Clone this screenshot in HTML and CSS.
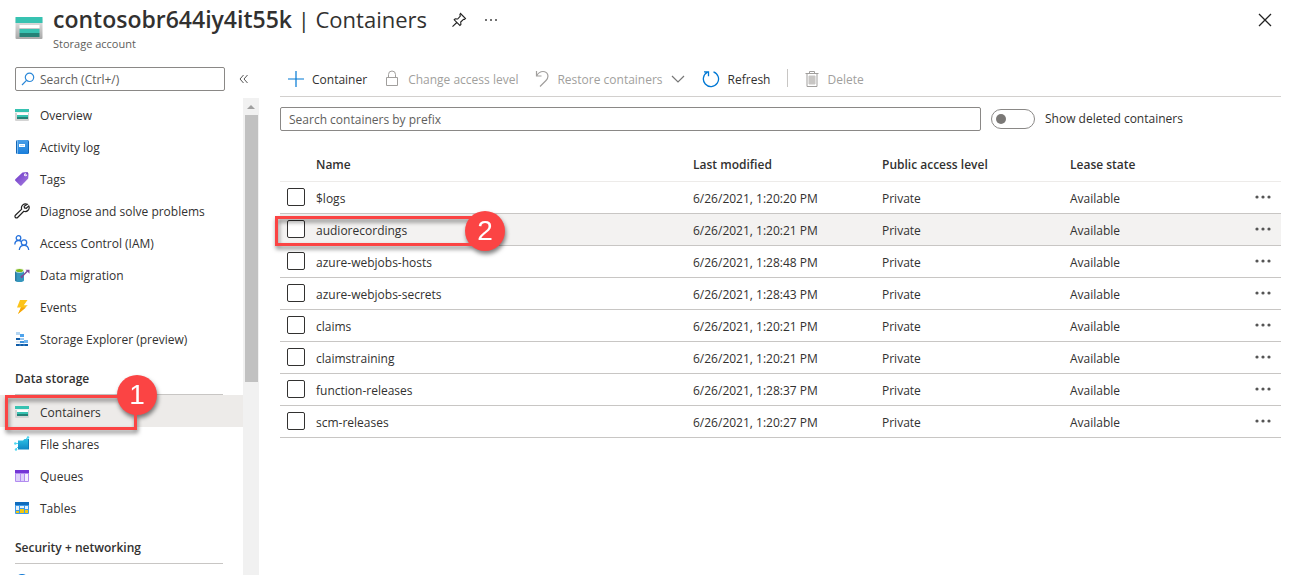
FILE: index.html
```html
<!DOCTYPE html>
<html lang="en">
<head>
<meta charset="utf-8">
<meta name="viewport" content="width=device-width, initial-scale=1">
<title>contosobr644iy4it55k | Containers</title>
<link rel="stylesheet" href="styles.css">
</head>
<body>
<svg class="defs" aria-hidden="true">
  <defs>
    <linearGradient id="g-body" x1="0" y1="0" x2="0" y2="1"><stop offset="0" stop-color="#e8e8e8"/><stop offset="1" stop-color="#a8a8a8"/></linearGradient>
    <linearGradient id="g-book" x1="0" y1="0" x2="0" y2="1"><stop offset="0" stop-color="#4a9fe8"/><stop offset="1" stop-color="#1a7fdc"/></linearGradient>
    <linearGradient id="g-tag" x1="0" y1="0" x2="1" y2="1"><stop offset="0" stop-color="#6a35c8"/><stop offset="1" stop-color="#a980e0"/></linearGradient>
    <linearGradient id="g-share" x1="0" y1="0" x2="0" y2="1"><stop offset="0" stop-color="#2cc0e4"/><stop offset="1" stop-color="#0f86c4"/></linearGradient>
    <symbol id="i-storage" viewBox="0 0 27 22">
      <rect y="1" width="27" height="21" rx="1" fill="url(#g-body)"/>
      <rect width="27" height="6" fill="#37c2b1"/>
      <rect x="4" y="8" width="20" height="3" fill="#fff"/>
      <rect x="4" y="12" width="20" height="4" fill="#37c2b1"/>
      <rect x="4" y="16" width="20" height="4" fill="#258277"/>
    </symbol>
    <symbol id="i-mini" viewBox="0 0 16 16">
      <rect x="1" y="2" width="14" height="12" rx="1" fill="#d4d4d4"/>
      <rect x="1" y="2" width="14" height="3" fill="#37c2b1"/>
      <rect x="1" y="5" width="14" height="1" fill="#eee"/>
      <rect x="3" y="6" width="11" height="2" fill="#fff"/>
      <rect x="3" y="8" width="11" height="2" fill="#37c2b1"/>
      <rect x="3" y="10" width="11" height="2" fill="#258277"/>
    </symbol>
  </defs>
</svg>

<header class="blade-header">
  <svg class="blade-icon" aria-hidden="true"><use href="#i-storage"/></svg>
  <div class="blade-titles">
    <div class="title-row">
      <h1 class="title"><strong class="title-name">contosobr644iy4it55k</strong> | Containers</h1>
      <button class="icon-button" type="button" aria-label="Pin to dashboard">
        <svg width="16" height="16" viewBox="0 0 16 16" fill="none" stroke="#222" stroke-width="1.100"><path d="M9.500 1.500l5 5-1 1-1-.2-2.800 2.700.2 2.500-1 1L3.200 7.800l1-1 2.500.2L9.300 4l-.4-1.500zM5.800 10.500L1.500 14.700"/></svg>
      </button>
      <button class="icon-button" type="button" aria-label="More options">
        <svg width="16" height="16" viewBox="0 0 16 16" fill="#444"><circle cx="3" cy="8" r="1"/><circle cx="8" cy="8" r="1"/><circle cx="13" cy="8" r="1"/></svg>
      </button>
    </div>
    <p class="subtitle">Storage account</p>
  </div>
  <button class="icon-button close" type="button" aria-label="Close">
    <svg width="16" height="16" viewBox="0 0 16 16" fill="none" stroke="#222" stroke-width="1.300"><path d="M2 2l12 12M14 2L2 14"/></svg>
  </button>
</header>

<div class="layout">
  <aside class="sidebar">
    <div class="menu-search">
      <label class="field">
        <svg width="14" height="14" viewBox="0 0 14 14" fill="none" stroke="#2b88d8" stroke-width="1.200" aria-hidden="true"><circle cx="8.500" cy="5.300" r="4.200"/><path d="M5.500 8.400L1 13"/></svg>
        <input class="field-input" type="text" placeholder="Search (Ctrl+/)" aria-label="Search menu">
      </label>
      <button class="icon-button collapse" type="button" aria-label="Collapse menu">
        <svg width="10" height="10" viewBox="0 0 10 10" fill="none" stroke="#555"><path d="M4.500 1L1 5l3.500 4M8.500 1L5 5l3.500 4"/></svg>
      </button>
    </div>
    <div class="menu-area">
      <nav class="menu" aria-label="Storage account">
        <a class="menu-item" href="#"><svg class="menu-icon" viewBox="0 0 16 16"><use href="#i-mini"/></svg>Overview</a>
        <a class="menu-item" href="#"><svg class="menu-icon" viewBox="0 0 16 16"><rect x="2" y="1" width="13" height="14" rx="1.500" fill="#1265b5"/><rect x="3" y="1" width="11" height="14" rx="1" fill="url(#g-book)"/><rect x="3" y="1" width="1" height="14" fill="#7dbcf0"/><rect x="5" y="5" width="6" height="3" fill="#fff"/><rect x="6" y="6" width="4" height="1" fill="#b9dbf7"/></svg>Activity log</a>
        <a class="menu-item" href="#"><svg class="menu-icon" viewBox="0 0 16 16"><path d="M1.300 8.200L8.500 1.500 13 1l1.500 1.500-.3 5L7.500 14.500q-.7.500-1.400 0L1.300 9.700q-.5-.8 0-1.500z" fill="url(#g-tag)"/><circle cx="11.500" cy="3.800" r="1.500" fill="#fff"/><path d="M11.400 4L14 1.500" stroke="#552f99" stroke-width=".8"/></svg>Tags</a>
        <a class="menu-item" href="#"><svg class="menu-icon" viewBox="0 0 16 16" fill="none" stroke="#222" stroke-width="1.200"><path d="M13.300 1.300a4 4 0 0 0-5.600 4.900L1.400 12.300a1.500 1.500 0 0 0 2.200 2.200L9.800 8.300a4 4 0 0 0 5-5.400l-2.500 2.400-1.800-.4-.3-1.600z"/></svg>Diagnose and solve problems</a>
        <a class="menu-item" href="#"><svg class="menu-icon" viewBox="0 0 16 16" fill="none" stroke="#2672dd" stroke-width="1.300"><circle cx="4.500" cy="3" r="2.300"/><path d="M.8 9.500q.2-4 3.700-4 1.800 0 2.700 1"/><circle cx="10" cy="7.500" r="2.700"/><path d="M5.300 15q.4-4.700 4.700-4.700t4.700 4.700"/></svg>Access Control (IAM)</a>
        <a class="menu-item" href="#"><svg class="menu-icon" viewBox="0 0 16 16"><path d="M1 3.500v9.500q0 2 4.500 2t4.500-2V3.500z" fill="#3596bd"/><path d="M1 3.500v9.500q0 1 1.500 1.500v-11z" fill="#2879a0"/><ellipse cx="5.500" cy="3.500" rx="4.500" ry="2.200" fill="#eaf5dc"/><ellipse cx="5.500" cy="3.500" rx="3.500" ry="1.500" fill="#7fba20"/><path d="M7 10.500L13.500 4" stroke="#804998" stroke-width="1.500"/><path d="M11.500 2.800h4v4z" fill="#804998"/><circle cx="7.800" cy="9.700" r="1.200" fill="#804998"/></svg>Data migration</a>
        <a class="menu-item" href="#"><svg class="menu-icon" viewBox="0 0 16 16"><path d="M6 1h7.500L9.800 6.200h4L4 15l3-6.500H3z" fill="#fcc419"/><path d="M7 8.500h5L4 15z" fill="#f7a70b"/></svg>Events</a>
        <a class="menu-item" href="#"><svg class="menu-icon" viewBox="0 0 16 16"><path d="M2 1h4v3H2z" fill="#b3d5f2"/><path d="M6 3h4v3H6z" fill="#4da3ec"/><path d="M2 7h4v2H2z" fill="#0f5ca8"/><path d="M6 7h4v2H6z" fill="#9ec9ef"/><path d="M2 10h4v2H2z" fill="#dfe7ee"/><path d="M6 10h4v2H6z" fill="#3c90dc"/><path d="M10 9h4v3h-4z" fill="#70b5ef"/><path d="M2 13h12v2H2z" fill="#0f5ca8"/><path d="M6 12.500V15M10 12.500V15" stroke="#7ab7ea" stroke-width=".6"/></svg>Storage Explorer (preview)</a>

        <h2 class="menu-heading">Data storage</h2>
        <a class="menu-item selected" href="#" aria-current="page"><svg class="menu-icon" viewBox="0 0 16 16"><use href="#i-mini"/></svg>Containers
          <span class="callout callout-menu" aria-hidden="true"><span class="callout-number">1</span></span>
        </a>
        <a class="menu-item" href="#"><svg class="menu-icon" viewBox="0 0 16 16"><path d="M4 4.500h5l1.500-1.500H15v9.500q0 1-1 1H4z" fill="url(#g-share)"/><path d="M14 3h1v9.500q0 1-1 1z" fill="#0f7cb8"/><path d="M1 7.500h3M2 13l2-2M12 3l2-1.500" stroke="#50d6f0"/><circle cx="1.300" cy="7.500" r="1.200" fill="#50d6f0"/><circle cx="2" cy="13.500" r="1.200" fill="#50d6f0"/><circle cx="14" cy="1.500" r="1.200" fill="#50d6f0"/></svg>File shares</a>
        <a class="menu-item" href="#"><svg class="menu-icon" viewBox="0 0 16 16"><rect x="1" y="2" width="14" height="12" rx="1" fill="#b28cf0"/><path d="M1 2h14v3H1z" fill="#7335d6"/><path d="M2 6h4v7H2zM7 6h3v7H7z" fill="#ddd0fa"/><path d="M11 6h3v7h-3z" fill="#f4effe"/></svg>Queues</a>
        <a class="menu-item" href="#"><svg class="menu-icon" viewBox="0 0 16 16"><rect x="1" y="2" width="14" height="12" rx="1" fill="#3d9be9"/><path d="M1 2h14v3H1z" fill="#0f6cbd"/><path d="M2 6h3v4H2zM6 6h4v2H6zM11 6h3v3h-3z" fill="#e4f2fd"/><path d="M2 11h3v2H2zM6 9h4v4H6zM11 10h3v3h-3z" fill="#f2c811"/></svg>Tables</a>

        <h2 class="menu-heading">Security + networking</h2>
        <a class="menu-item" href="#" aria-label="Networking"><svg class="menu-icon" viewBox="0 0 16 16"><circle cx="8" cy="8" r="7" fill="#0f78d4"/></svg></a>
      </nav>
      <div class="scrollbar" aria-hidden="true">
        <svg class="scroll-arrow" viewBox="0 0 8 4"><path d="M4 0l4 4H0z" fill="#a0a0a0"/></svg>
        <div class="scroll-thumb"></div>
      </div>
    </div>
  </aside>

  <main class="content">
    <div class="toolbar" role="toolbar" aria-label="Container actions">
      <button class="command" type="button">
        <svg width="16" height="16" viewBox="0 0 16 16" stroke="#0078d4" stroke-width="1.200"><path d="M8 0v16M0 8h16"/></svg><span class="command-text">Container</span></button>
      <button class="command" type="button" disabled>
        <svg width="16" height="18" viewBox="0 0 16 18" fill="none" stroke="#a19f9d"><path d="M2.500 7.500h11v8h-11zM4.500 7.500V4.500a3.500 3.500 0 0 1 7 0v3"/></svg><span class="command-text">Change access level</span></button>
      <button class="command" type="button" disabled>
        <svg width="14" height="18" viewBox="0 0 14 18" fill="none" stroke="#a19f9d" stroke-width="1.200"><path d="M1.500 1v5h5M1.500 6Q4 1.500 8 1.500c5 0 6.500 5.500 3 9L5 16.500"/></svg><span class="command-text">Restore containers</span>
        <svg width="14" height="8" viewBox="0 0 14 8" fill="none" stroke="#777" stroke-width="1.200"><path d="M1 1l6 6 6-6"/></svg></button>
      <button class="command" type="button">
        <svg width="18" height="18" viewBox="0 0 18 18" fill="none" stroke="#0078d4" stroke-width="1.300"><path d="M11.500 1.800A7.600 7.600 0 1 1 5.500 2.200M2 1.800h4.500v4.500"/></svg><span class="command-text">Refresh</span></button>
      <span class="divider"></span>
      <button class="command" type="button" disabled>
        <svg width="14" height="18" viewBox="0 0 14 18" fill="none" stroke="#a19f9d"><path d="M.5 3.500h13M4.500 3V1.500h5V3M2 3.500v13h10v-13"/><path d="M4 6h6v8H4z" fill="#c8c6c4" stroke="#c8c6c4"/></svg><span class="command-text">Delete</span></button>
    </div>

    <div class="filters">
      <input class="prefix" type="text" placeholder="Search containers by prefix" aria-label="Search containers by prefix">
      <label class="toggle"><input class="switch" type="checkbox" role="switch">Show deleted containers</label>
    </div>

    <table class="grid">
      <colgroup><col class="col-check"><col><col class="col-modified"><col class="col-access"><col class="col-lease"><col class="col-more"></colgroup>
      <thead>
        <tr><th></th><th scope="col">Name</th><th scope="col">Last modified</th><th scope="col">Public access level</th><th scope="col">Lease state</th><th></th></tr>
      </thead>
      <tbody id="rows"></tbody>
    </table>
  </main>
</div>
<script src="app.js"></script>
</body>
</html>
```
FILE: app.js
```javascript
const containers = [
  ["$logs", "6/26/2021, 1:20:20 PM"],
  ["audiorecordings", "6/26/2021, 1:20:21 PM"],
  ["azure-webjobs-hosts", "6/26/2021, 1:28:48 PM"],
  ["azure-webjobs-secrets", "6/26/2021, 1:28:43 PM"],
  ["claims", "6/26/2021, 1:20:21 PM"],
  ["claimstraining", "6/26/2021, 1:20:21 PM"],
  ["function-releases", "6/26/2021, 1:28:37 PM"],
  ["scm-releases", "6/26/2021, 1:20:27 PM"]
];

document.getElementById("rows").innerHTML = containers.map(([name, modified]) => {
  const active = name === "audiorecordings";
  const callout = active
    ? '<span class="callout callout-row" aria-hidden="true"><span class="callout-number">2</span></span>'
    : "";
  return `<tr class="${active ? "active" : ""}">
    <td class="check-cell"><input class="check" type="checkbox" aria-label="Select ${name}">${callout}</td>
    <td>${name}</td><td>${modified}</td><td>Private</td><td>Available</td>
    <td class="more-cell"><button class="icon-button" type="button" aria-label="More actions for ${name}">
      <svg width="18" height="16" viewBox="0 0 18 16" fill="#555"><circle cx="3" cy="8" r="1.600"/><circle cx="9" cy="8" r="1.600"/><circle cx="15" cy="8" r="1.600"/></svg>
    </button></td></tr>`;
}).join("");
```
FILE: styles.css
```css
* {
  box-sizing: border-box;
}

body {
  margin: 0;
  height: 100vh;
  display: flex;
  flex-direction: column;
  overflow: hidden;
  background: #fff;
  color: #323130;
  font: 12px/16px "Open Sans", "Noto Sans", sans-serif;
}

button,
input {
  font: inherit;
  color: inherit;
}

.defs {
  position: absolute;
  width: 0;
  height: 0;
}

.icon-button {
  display: inline-flex;
  padding: 0;
  border: 0;
  background: none;
}

/* Header */
.blade-header {
  display: flex;
  align-items: flex-start;
  padding: 4px 26px 0 15px;
}

.blade-icon {
  width: 28px;
  height: 22px;
  margin: 13px 10px 0 0;
}

.blade-titles {
  flex: 1;
}

.title-row {
  display: flex;
  align-items: center;
  gap: 16px;
}

.title {
  margin: 0 8px 2px 0;
  font-size: 22px;
  line-height: 30px;
  font-weight: 400;
}

.title-name {
  font-size: 23px;
  font-weight: 600;
}

.subtitle {
  margin: 0;
  font-size: 11px;
  color: #605e5c;
}

.close {
  margin-top: 8px;
}

/* Sidebar */
.layout {
  flex: 1;
  display: flex;
  min-height: 0;
  padding-top: 15px;
}

.sidebar {
  flex: none;
  width: 259px;
  display: flex;
  flex-direction: column;
}

.menu-search {
  display: flex;
  align-items: center;
  gap: 14px;
  padding: 0 0 7px 15px;
}

.field {
  width: 210px;
  height: 24px;
  display: flex;
  align-items: center;
  gap: 5px;
  padding: 0 5px;
  border: 1px solid #8a8886;
  border-radius: 2px;
}

.field-input {
  flex: 1;
  min-width: 0;
  padding: 2px 0 0;
  border: 0;
  outline: 0;
  background: none;
}

::placeholder {
  color: #605e5c;
  opacity: 1;
}

.menu-area {
  flex: 1;
  display: flex;
  min-height: 0;
}

.menu {
  flex: 1;
  overflow: hidden;
}

.menu-item {
  position: relative;
  height: 32px;
  display: flex;
  align-items: center;
  gap: 10px;
  padding: 4px 0 0 14px;
  color: inherit;
  text-decoration: none;
}

.menu-icon {
  flex: none;
  width: 16px;
  height: 16px;
  margin-bottom: 2px;
}

.menu-heading {
  height: 41px;
  margin: 0 20px 0 15px;
  padding-top: 17px;
  border-bottom: 1px solid #c8c6c4;
  font-size: 12px;
  line-height: 16px;
  font-weight: 600;
}

.selected {
  background: #edebe9;
}

.scrollbar {
  width: 16px;
  display: flex;
  flex-direction: column;
  align-items: center;
  background: #f1f1f1;
}

.scroll-arrow {
  width: 8px;
  height: 4px;
  margin: 7px 0 6px;
}

.scroll-thumb {
  width: 13px;
  height: 56%;
  background: #c1c1c1;
}

.scroll-arrow,
.scroll-thumb {
  flex: none;
}

/* Content */
.content {
  flex: 1;
  min-width: 0;
  padding: 0 18px 0 21px;
}

.toolbar {
  height: 30px;
  display: flex;
  align-items: flex-start;
  gap: 17px;
  padding-left: 8px;
  border-bottom: 1px solid #d2d0ce;
}

.command {
  height: 24px;
  display: flex;
  align-items: center;
  gap: 8px;
  padding: 0;
  border: 0;
  background: none;
  white-space: nowrap;
}

.command-text {
  padding-top: 2px;
}

.command:disabled {
  color: #a19f9d;
}

.divider {
  width: 1px;
  height: 18px;
  margin-top: 2px;
  background: #c8c6c4;
}

.filters {
  display: flex;
  align-items: center;
  gap: 10px;
  padding-top: 10px;
}

.prefix {
  flex: 1;
  min-width: 0;
  height: 24px;
  padding: 0 8px;
  border: 1px solid #8a8886;
  border-radius: 2px;
}

.toggle {
  width: 290px;
  display: flex;
  align-items: center;
  gap: 10px;
}

.switch {
  appearance: none;
  width: 44px;
  height: 20px;
  display: flex;
  align-items: center;
  margin: 0;
  padding: 0 4px;
  border: 1px solid #8a8886;
  border-radius: 10px;
}

.switch::before {
  content: "";
  width: 10px;
  height: 10px;
  border-radius: 50%;
  background: #7a7876;
}

.switch:checked::before {
  margin-left: auto;
}

/* Table */
.grid {
  width: 100%;
  margin-top: 16px;
  border-collapse: separate;
  border-spacing: 0;
  table-layout: fixed;
}

.col-check {
  width: 36px;
}

.col-modified {
  width: 189px;
}

.col-access {
  width: 188px;
}

.col-lease {
  width: 175px;
}

.col-more {
  width: 36px;
}

.grid th {
  height: 35px;
  padding: 2px 0 0;
  border-bottom: 1px solid #edebe9;
  text-align: left;
  font-weight: 600;
}

.grid td {
  height: 32px;
  padding: 2px 0 0;
  border-bottom: 1px solid #c8c6c4;
}

.active td {
  background: #f3f2f1;
}

.grid .check-cell {
  position: relative;
  padding: 0 0 2px 7px;
}

.check {
  appearance: none;
  display: block;
  width: 18px;
  height: 18px;
  margin: 0;
  border: 1px solid #323130;
  border-radius: 2px;
  background: #fff;
}

.check:checked {
  background: #0078d4;
}

.grid .more-cell {
  padding: 0 0 2px 9px;
}

.more-cell .icon-button {
  display: flex;
}

/* Numbered highlights laid over the page */
.callout {
  position: absolute;
  z-index: 1;
  border: 3px solid #fb4444;
  filter: drop-shadow(1px 3px 2px rgba(0, 0, 0, 0.5));
  pointer-events: none;
}

.callout-menu {
  left: 5px;
  top: 0;
  width: 132px;
  height: 35px;
}

.callout-row {
  left: -5px;
  top: 2px;
  width: 210px;
  height: 30px;
}

.callout-number {
  position: absolute;
  right: -23px;
  width: 40px;
  height: 40px;
  border-radius: 50%;
  background: #fb4444;
  color: #fff;
  font: 28px/40px "Liberation Sans", sans-serif;
  text-align: center;
}

.callout-menu .callout-number {
  top: -23px;
}

.callout-row .callout-number {
  top: -8px;
}
```
